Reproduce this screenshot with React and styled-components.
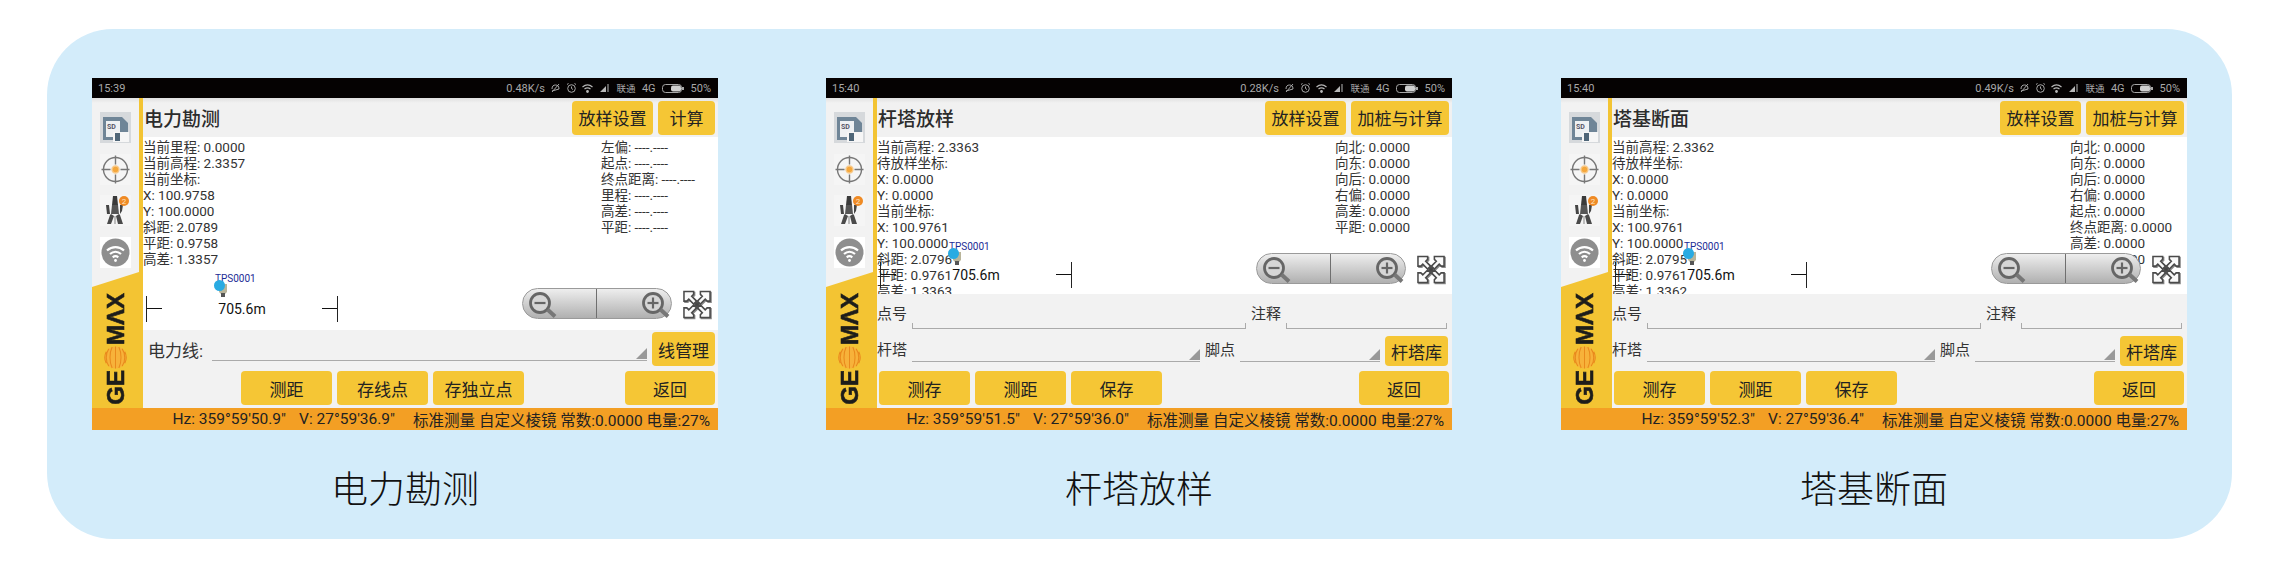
import React from "react";
import styled, { createGlobalStyle } from "styled-components";

const GlobalStyle = createGlobalStyle`
  html, body {
    margin: 0;
    padding: 0;
    background: #ffffff;
    font-family: Roboto, "Noto Sans CJK SC", sans-serif;
  }
`;

const Panel = styled.div`
  box-sizing: border-box;
  width: 2185px;
  height: 510px;
  margin: 29px 0 0 47px;
  padding: 49px 45px 0 45px;
  background: #d3ecfa;
  border-radius: 66px;
  display: grid;
  grid-template-columns: 734px 735px 626px;
`;
const Column = styled.div`
  width: 626px;
  display: flex;
  flex-direction: column;
  align-items: center;
`;
const Caption = styled.div`
  margin-top: 38px;
  font-size: 37px;
  line-height: 46px;
  font-weight: 300;
  color: #111;
`;
const Phone = styled.div`
  width: 626px;
  height: 352px;
  display: flex;
  flex-direction: column;
  background: #f2f2f2;
  overflow: hidden;
`;
const StatusBar = styled.div`
  height: 20px;
  flex-shrink: 0;
  background: #050202;
  color: #a8a8a8;
  font-size: 11px;
  display: flex;
  align-items: center;
  justify-content: space-between;
  padding: 0 7px 0 6px;
`;
const StatusRight = styled.div`
  display: flex;
  align-items: center;
  gap: 6.5px;
`;
const Carrier = styled.span`
  font-size: 9.5px;
`;
const Main = styled.div`
  flex: 1;
  min-height: 0;
  display: flex;
`;
const Sidebar = styled.div`
  width: 47px;
  flex-shrink: 0;
  display: flex;
  flex-direction: column;
  align-items: center;
  border-right: 4px solid #f3c433;
  background: linear-gradient(#e2e2e2, #f2f2f2 5px);
`;
const SideIcons = styled.div`
  display: flex;
  flex-direction: column;
  gap: 10.6px;
  padding-top: 14px;
`;
const IconBox = styled.div`
  width: 31px;
  height: 31px;
  background: ${p => p.$bg || "#f5f5f5"};
  display: flex;
`;
const LogoPanel = styled.div`
  margin-top: auto;
  width: 100%;
  height: 136px;
  box-sizing: border-box;
  background: #f3c433;
  clip-path: polygon(0 15px, 100% 0, 100% 100%, 0 100%);
  display: flex;
  flex-direction: column-reverse;
  align-items: center;
  padding-bottom: 3px;
  gap: 1px;
`;
const LogoText = styled.span`
  writing-mode: vertical-rl;
  transform: rotate(180deg);
  font-family: "Liberation Sans", sans-serif;
  font-weight: 700;
  font-size: 24px;
  line-height: 24px;
  color: #1d1d1b;
  -webkit-text-stroke: 0.6px #1d1d1b;
`;
const Content = styled.div`
  flex: 1;
  min-width: 0;
  display: flex;
  flex-direction: column;
`;
const TitleBar = styled.div`
  height: 39px;
  flex-shrink: 0;
  display: flex;
  align-items: center;
  padding: 0 3px 0 1px;
  gap: 5px;
  background: linear-gradient(#e0e0e0, #f1f1f1 5px);
`;
const Title = styled.div`
  flex: 1;
  font-size: 19px;
  font-weight: 500;
  color: #2c2c2c;
`;
const YellowButton = styled.div`
  width: ${p => p.$w}px;
  height: ${p => p.$h || 34}px;
  flex-shrink: 0;
  align-self: ${p => (p.$h ? "flex-end" : "auto")};
  margin-left: ${p => (p.$push ? "auto" : "0")};
  background: #f5c635;
  border-radius: 4px;
  color: #222;
  font-size: 17px;
  display: flex;
  align-items: center;
  justify-content: center;
  white-space: nowrap;
`;
const Canvas = styled.div`
  flex: 1;
  min-height: 0;
  position: relative;
  overflow: hidden;
  background: #ffffff;
  padding-top: 2px;
  box-sizing: border-box;
  display: grid;
  grid-template-columns: 458px 1fr;
  align-content: start;
  color: #333;
  font-size: 13.5px;
  line-height: 16px;
`;
const Readout = styled.div`
  white-space: nowrap;
`;
const Marker = styled.div`
  position: absolute;
  left: 72px;
  top: ${p => p.$top}px;
  width: 46px;
  height: 28px;
`;
const MarkerLabel = styled.div`
  color: #1c2c96;
  font-size: 10px;
  line-height: 12px;
`;
const MarkerDot = styled.div`
  position: absolute;
  left: -1px;
  top: ${p => p.$top}px;
  width: 11px;
  height: 11px;
  border-radius: 50%;
  background: #29abe2;
`;
const MarkerPrism = styled.svg`
  position: absolute;
  left: 3px;
  top: ${p => p.$top}px;
`;
const ScaleBar = styled.div`
  position: absolute;
  left: 3px;
  bottom: ${p => p.$bottom}px;
  width: 192px;
  height: 26px;
  display: flex;
  align-items: center;
  justify-content: space-between;
  color: #111;
  font-size: 14px;
`;
const ScaleEnd = styled.div`
  width: 16px;
  height: 26px;
  box-sizing: border-box;
  position: relative;
  ${p => (p.$right ? "border-right" : "border-left")}: 1px solid #222;
  &::after {
    content: "";
    position: absolute;
    left: 0;
    right: 0;
    top: 12px;
    height: 1px;
    background: #111;
  }
`;
const ZoomPill = styled.div`
  position: absolute;
  right: 46px;
  bottom: ${p => p.$bottom}px;
  width: 150px;
  height: 31px;
  box-sizing: border-box;
  border: 1px solid #9a9a9a;
  border-radius: 16px;
  background: linear-gradient(#eeeeee, #d2d2d2 45%, #b0b0b0);
  display: flex;
  align-items: center;
  justify-content: space-between;
  padding: 0 0 0 5px;
  &::after {
    content: "";
    position: absolute;
    left: 73px;
    top: 0;
    bottom: 0;
    width: 1px;
    background: #6f6f6f;
  }
`;
const ExpandIcon = styled.svg`
  position: absolute;
  right: 7px;
  bottom: ${p => p.$bottom}px;
  filter: drop-shadow(1px 1px 0 #8a8a8a);
`;
const Form = styled.div`
  flex-shrink: 0;
  display: flex;
  flex-direction: column;
  padding-bottom: 3px;
`;
const Row = styled.div`
  height: ${p => p.$h}px;
  display: flex;
  gap: 5px;
  box-sizing: border-box;
  padding: ${p => p.$pad};
`;
const Label = styled.div`
  flex-shrink: 0;
  align-self: center;
  color: #333;
  font-size: ${p => p.$size || 15}px;
  width: ${p => p.$w}px;
  margin-right: ${p => p.$mr || 0}px;
  white-space: nowrap;
`;
const Field = styled.div`
  position: relative;
  width: ${p => (p.$w ? `${p.$w}px` : "auto")};
  flex: ${p => (p.$w ? "none" : "1")};
  align-self: flex-end;
  height: 6px;
  margin-bottom: ${p => p.$mb}px;
  box-sizing: border-box;
  border-bottom: 1px solid #aaa;
  ${p => !p.$spinner && "border-left: 1px solid #aaa; border-right: 1px solid #aaa;"}
  &::after {
    content: "";
    display: ${p => (p.$spinner ? "block" : "none")};
    position: absolute;
    right: 0;
    bottom: 1px;
    border-style: solid;
    border-width: 0 0 11px 11px;
    border-color: transparent transparent #999 transparent;
  }
`;
const ActionRow = styled.div`
  display: flex;
  gap: 5px;
  margin-top: 5px;
  padding: 0 3px 0 ${p => p.$left}px;
`;
const Footer = styled.div`
  height: 22px;
  flex-shrink: 0;
  background: #f39f24;
  color: #222;
  font-size: 15.5px;
  display: flex;
  align-items: center;
  justify-content: flex-end;
  padding-right: 8px;
  white-space: nowrap;
`;
const FooterAngle = styled.span`
  margin-right: ${p => p.$mr}px;
`;

function SdIcon() {
  return (
    <svg width="31" height="31" viewBox="0 0 31 31">
      <path d="M3 5h19l6 6v17H3z" fill="#6f8597" />
      <rect x="6" y="9" width="14" height="16" fill="#eef1f3" />
      <text x="7" y="17" fontSize="7" fontWeight="700" fontFamily="Roboto" fill="#556">SD</text>
      <rect x="13" y="20" width="16" height="10" fill="#f6f6f6" />
      <rect x="15" y="21" width="5" height="8" fill="#4f6678" />
    </svg>
  );
}
function TargetIcon() {
  return (
    <svg width="31" height="31" viewBox="0 0 31 31" fill="none" stroke="#777" strokeWidth="1.4">
      <circle cx="15.5" cy="15.5" r="12" />
      <path d="M15.5 1.5v9M15.5 20.5v9M1.5 15.5h9M20.5 15.5h9" />
      <circle cx="15.5" cy="15.5" r="3.5" fill="#f5a83c" stroke="#f7c98a" />
    </svg>
  );
}
function TowerIcon() {
  return (
    <svg width="31" height="31" viewBox="0 0 31 31">
      <path d="M13 1h4l1 9h-6z" fill="#3a3a3a" />
      <path d="M12 10h6l1 9h-8z" fill="#555" />
      <path d="M6 10h3l1 9H7zM20 10h3l-1 6-2 3z" fill="#444" />
      <path d="M11 19l-1 1-3 9h4l3-8zM19 19l1 1 3 9h-5l-2-8z" fill="#4a4a4a" />
      <path d="M14 21h2v8h-2z" fill="#bdbdbd" />
      <circle cx="24" cy="6" r="5" fill="#ef8a24" />
      <text x="24" y="9" textAnchor="middle" fontSize="8" fontFamily="Roboto" fill="#fde3c2">2</text>
    </svg>
  );
}
function WifiIcon() {
  return (
    <svg width="31" height="31" viewBox="0 0 31 31" fill="none" stroke="#fff" strokeWidth="2.2">
      <circle cx="15.5" cy="15.5" r="14" fill="#8e8e8e" stroke="none" />
      <path d="M7 13.5c5-4.500 12-4.500 17 0M10 17c3.300-3 7.700-3 11 0M12.700 20.300c1.700-1.400 3.900-1.400 5.600 0" />
      <circle cx="15.500" cy="23.500" r="1.400" fill="#fff" stroke="none" />
    </svg>
  );
}
function LogoBall() {
  return (
    <svg width="23" height="23" viewBox="0 0 24 24" fill="none" stroke="#e98a1c" strokeWidth="1.1">
      <circle cx="12" cy="12" r="11.500" fill="#f7b23a" stroke="none" />
      <path d="M12 .5v23M8.500 1c-3 6-3 16 0 22M15.500 1c3 6 3 16 0 22M5 3c-3.500 5-3.500 13 0 18M19 3c3.500 5 3.500 13 0 18M2.300 6c-2 4-2 8 0 12M21.700 6c2 4 2 8 0 12" />
    </svg>
  );
}
function MagnifierIcon({ plus }) {
  return (
    <svg width="30" height="29" viewBox="0 0 30 29" fill="none" stroke="#666">
      <circle cx="12" cy="14" r="9.500" strokeWidth="2.800" fill="#d6d6d6" />
      <path d="M6.500 14h11" strokeWidth="2.200" />
      {plus && <path d="M12 8.500v11" strokeWidth="2.200" />}
      <path d="M19.500 20.500l7.500 7" strokeWidth="4" stroke="#777" />
    </svg>
  );
}
function Expand({ bottom }) {
  return (
    <ExpandIcon $bottom={bottom} width="28" height="29" viewBox="0 0 29 29" fill="#fafafa" stroke="#4a4a4a" strokeWidth="1.600">
      <path d="M1 1h10v3l-2 2 5 5-3 3-5-5-2 2H1z" />
      <path d="M28 1H18v3l2 2-5 5 3 3 5-5 2 2h3z" />
      <path d="M1 28h10v-3l-2-2 5-5-3-3-5 5-2-2H1z" />
      <path d="M28 28H18v-3l2-2-5-5 3-3 5 5 2-2h3z" />
      <circle cx="14.500" cy="14.500" r="1.800" fill="#444" />
    </ExpandIcon>
  );
}
function StatusIcons() {
  return (
    <>
      <svg width="9" height="10" viewBox="0 0 9 10" fill="none" stroke="#a8a8a8">
        <path d="M1 6c0-3 1.500-4 3.500-4S8 3 8 6l-7 2M8 1L1 9" />
      </svg>
      <svg width="9" height="10" viewBox="0 0 9 10" fill="none" stroke="#a8a8a8">
        <circle cx="4.500" cy="5.500" r="3.800" />
        <path d="M4.500 3.500v2l1.500 1M0 1.500l1.500-1M9 1.500l-1.500-1" />
      </svg>
      <svg width="11" height="9" viewBox="0 0 11 9" fill="none" stroke="#b8b8b8" strokeWidth="1.200">
        <path d="M.5 3c3-2.500 7-2.500 10 0M2.500 5c2-1.600 4-1.600 6 0" />
        <circle cx="5.500" cy="7.500" r=".8" fill="#b8b8b8" />
      </svg>
      <svg width="10" height="8" viewBox="0 0 10 8" fill="#b8b8b8">
        <path d="M0 8L6 2v6zM7.500 0h1v8h-1z" />
      </svg>
    </>
  );
}
function Battery() {
  return (
    <svg width="22" height="9" viewBox="0 0 22 9">
      <rect x=".5" y=".5" width="19" height="8" rx="3" fill="none" stroke="#a8a8a8" />
      <rect x="9" y="1.500" width="10" height="6" rx="2" fill="#d0d0d0" />
      <rect x="20" y="3" width="2" height="3" fill="#a8a8a8" />
    </svg>
  );
}

const screens = [
  {
    caption: "电力勘测",
    time: "15:39",
    speed: "0.48K/s",
    actions: ["放样设置", "计算"],
    actionWidth: 57,
    left: ["当前里程: 0.0000", "当前高程: 2.3357", "当前坐标:", "X: 100.9758", "Y: 100.0000", "斜距: 2.0789", "平距: 0.9758", "高差: 1.3357"],
    right: ["左偏: ----.----", "起点: ----.----", "终点距离: ----.----", "里程: ----.----", "高差: ----.----", "平距: ----.----"],
    hz: "Hz: 359°59'50.9\"",
    v: "V: 27°59'36.9\"",
    markerTop: 136,
    scaleBottom: 8,
    zoomBottom: 11,
    buttons: ["测距", "存线点", "存独立点"],
    buttonsLeft: 98,
    line: true,
  },
  {
    caption: "杆塔放样",
    time: "15:40",
    speed: "0.28K/s",
    actions: ["放样设置", "加桩与计算"],
    actionWidth: 98,
    left: ["当前高程: 2.3363", "待放样坐标:", "X: 0.0000", "Y: 0.0000", "当前坐标:", "X: 100.9761", "Y: 100.0000", "斜距: 2.0796", "平距: 0.9761", "高差: 1.3363"],
    right: ["向北: 0.0000", "向东: 0.0000", "向后: 0.0000", "右偏: 0.0000", "高差: 0.0000", "平距: 0.0000"],
    hz: "Hz: 359°59'51.5\"",
    v: "V: 27°59'36.0\"",
    markerTop: 104,
    scaleBottom: 6,
    zoomBottom: 10,
    buttons: ["测存", "测距", "保存"],
    buttonsLeft: 2,
  },
  {
    caption: "塔基断面",
    time: "15:40",
    speed: "0.49K/s",
    actions: ["放样设置", "加桩与计算"],
    actionWidth: 98,
    left: ["当前高程: 2.3362", "待放样坐标:", "X: 0.0000", "Y: 0.0000", "当前坐标:", "X: 100.9761", "Y: 100.0000", "斜距: 2.0795", "平距: 0.9761", "高差: 1.3362"],
    right: ["向北: 0.0000", "向东: 0.0000", "向后: 0.0000", "右偏: 0.0000", "起点: 0.0000", "终点距离: 0.0000", "高差: 0.0000", "平距: 0.0000"],
    hz: "Hz: 359°59'52.3\"",
    v: "V: 27°59'36.4\"",
    markerTop: 104,
    scaleBottom: 6,
    zoomBottom: 10,
    buttons: ["测存", "测距", "保存"],
    buttonsLeft: 2,
  },
];

function DeviceScreen({ s }) {
  return (
    <Phone>
      <StatusBar>
        <span>{s.time}</span>
        <StatusRight>
          <span>{s.speed}</span>
          <StatusIcons />
          <Carrier>联通</Carrier>
          <span>4G</span>
          <Battery />
          <span>50%</span>
        </StatusRight>
      </StatusBar>
      <Main>
        <Sidebar>
          <SideIcons>
            <IconBox $bg="#d6d9dc"><SdIcon /></IconBox>
            <IconBox><TargetIcon /></IconBox>
            <IconBox><TowerIcon /></IconBox>
            <IconBox $bg="#ffffff"><WifiIcon /></IconBox>
          </SideIcons>
          <LogoPanel>
            <LogoText>GE</LogoText>
            <LogoBall />
            <LogoText>MΛX</LogoText>
          </LogoPanel>
        </Sidebar>
        <Content>
          <TitleBar>
            <Title>{s.caption}</Title>
            <YellowButton $w={81}>{s.actions[0]}</YellowButton>
            <YellowButton $w={s.actionWidth}>{s.actions[1]}</YellowButton>
          </TitleBar>
          <Canvas>
            <Readout>{s.left.map(t => <div key={t}>{t}</div>)}</Readout>
            <Readout>{s.right.map(t => <div key={t}>{t}</div>)}</Readout>
            <Marker $top={s.markerTop}>
              <MarkerLabel>TPS0001</MarkerLabel>
              <MarkerPrism $top={10} width="10" height="14" viewBox="0 0 10 14">
                <path d="M1 1h8v8l-2 2H3L1 9z" fill="#b9b59a" />
                <rect x="3" y="10" width="4" height="4" fill="#555" />
              </MarkerPrism>
              <MarkerDot $top={7} />
            </Marker>
            <ScaleBar $bottom={s.scaleBottom}>
              <ScaleEnd />
              <span>705.6m</span>
              <ScaleEnd $right />
            </ScaleBar>
            <ZoomPill $bottom={s.zoomBottom}>
              <MagnifierIcon />
              <MagnifierIcon plus />
            </ZoomPill>
            <Expand bottom={s.zoomBottom} />
          </Canvas>
          <Form>
            {s.line ? (
              <Row $h={36} $pad="2px 3px 0 5px">
                <Label $size={17} $w={56} $mr={3}>电力线:</Label>
                <Field $spinner $mb={5} />
                <YellowButton $w={63}>线管理</YellowButton>
              </Row>
            ) : (
              <>
                <Row $h={36} $pad="0 5px 0 0">
                  <Label $w={30}>点号</Label>
                  <Field $w={334} $mb={1} />
                  <Label $w={30}>注释</Label>
                  <Field $mb={1} />
                </Row>
                <Row $h={36} $pad="0 3px 0 0">
                  <Label $w={30}>杆塔</Label>
                  <Field $w={288} $spinner $mb={4} />
                  <Label $w={30}>脚点</Label>
                  <Field $w={140} $spinner $mb={4} />
                  <YellowButton $w={63} $h={30}>杆塔库</YellowButton>
                </Row>
              </>
            )}
            <ActionRow $left={s.buttonsLeft}>
              {s.buttons.map(b => <YellowButton key={b} $w={91}>{b}</YellowButton>)}
              <YellowButton $w={90} $push>返回</YellowButton>
            </ActionRow>
          </Form>
        </Content>
      </Main>
      <Footer>
        <FooterAngle $mr={13}>{s.hz}</FooterAngle>
        <FooterAngle $mr={18}>{s.v}</FooterAngle>
        <span>标准测量 自定义棱镜 常数:0.0000 电量:27%</span>
      </Footer>
    </Phone>
  );
}

export default function App() {
  return (
    <>
      <GlobalStyle />
      <Panel>
        {screens.map(s => (
          <Column key={s.caption}>
            <DeviceScreen s={s} />
            <Caption>{s.caption}</Caption>
          </Column>
        ))}
      </Panel>
    </>
  );
}
